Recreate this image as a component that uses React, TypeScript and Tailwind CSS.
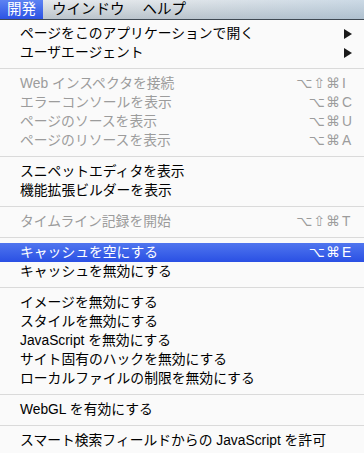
import React from "react";

type Item =
  | { sep: true }
  | {
      sep?: false;
      t: string;
      dis?: boolean;
      sub?: boolean;
      hl?: boolean;
      mods?: string;
      k?: string;
    };

const items: Item[] = [
  { t: "ページをこのアプリケーションで開く", sub: true },
  { t: "ユーザエージェント", sub: true },
  { sep: true },
  { t: "Web インスペクタを接続", dis: true, mods: "⌥⇧⌘", k: "I" },
  { t: "エラーコンソールを表示", dis: true, mods: "⌥⌘", k: "C" },
  { t: "ページのソースを表示", dis: true, mods: "⌥⌘", k: "U" },
  { t: "ページのリソースを表示", dis: true, mods: "⌥⌘", k: "A" },
  { sep: true },
  { t: "スニペットエディタを表示" },
  { t: "機能拡張ビルダーを表示" },
  { sep: true },
  { t: "タイムライン記録を開始", dis: true, mods: "⌥⇧⌘", k: "T" },
  { sep: true },
  { t: "キャッシュを空にする", hl: true, mods: "⌥⌘", k: "E" },
  { t: "キャッシュを無効にする" },
  { sep: true },
  { t: "イメージを無効にする" },
  { t: "スタイルを無効にする" },
  { t: "JavaScript を無効にする" },
  { t: "サイト固有のハックを無効にする" },
  { t: "ローカルファイルの制限を無効にする" },
  { sep: true },
  { t: "WebGL を有効にする" },
  { sep: true },
  { t: "スマート検索フィールドからの JavaScript を許可" },
];

function Arrow() {
  return (
    <svg width="8" height="10" viewBox="0 0 8 10" className="block">
      <polygon points="0,0 8,5 0,10" fill="#1a1a1a" />
    </svg>
  );
}

export default function App() {
  return (
    <div className="w-[364px] h-[453px] overflow-hidden bg-[#fafafa] font-['Lucida_Grande','Liberation_Sans','Noto_Sans_CJK_JP',sans-serif] text-[13.8px] leading-[19px] relative">
      {/* menu bar */}
      <div className="h-[20px] flex items-stretch bg-gradient-to-b from-[#e9ebed] via-[#d3d8dc] to-[#bcc4cb] border-b border-[#3f4953] relative text-[14.5px]">
        <div className="absolute inset-0 bg-gradient-to-r from-transparent via-[rgba(170,195,215,0.15)] to-[rgba(150,185,215,0.35)] pointer-events-none" />
        <div className="relative flex items-center pl-[7px] pr-[7px] bg-gradient-to-b from-[#5d82f2] to-[#2d52e4] text-white">
          開発
        </div>
        <div className="relative flex items-center pl-[9px] pr-[8px] text-black">
          ウインドウ
        </div>
        <div className="relative flex items-center pl-[10px] text-black">
          ヘルプ
        </div>
      </div>

      {/* menu */}
      <div className="pt-[4px] flex flex-col">
        {items.map((it, i) => {
          if (it.sep) {
            return (
              <div key={i} className="h-[12px] flex items-center">
                <div className="h-px w-full bg-[#dadada]" />
              </div>
            );
          }
          const color = it.hl
            ? "text-white"
            : it.dis
            ? "text-[#9c9c9c]"
            : "text-black";
          return (
            <div
              key={i}
              className={`h-[19px] flex items-center pl-[20px] pr-[10px] ${color} ${
                it.hl
                  ? "bg-gradient-to-b from-[#5075ee] to-[#2a4fe4]"
                  : ""
              }`}
            >
              <span className="flex-1 whitespace-nowrap">{it.t}</span>
              {it.sub && (
                <span className="mr-[2px]">
                  <Arrow />
                </span>
              )}
              {it.mods && (
                <span className="flex items-center">
                  <span className="font-['DejaVu_Sans',sans-serif] text-[14px] tracking-[1px] text-right">
                    {it.mods}
                  </span>
                  <span className="w-[12px] ml-[1px]">{it.k}</span>
                </span>
              )}
            </div>
          );
        })}
      </div>
    </div>
  );
}
